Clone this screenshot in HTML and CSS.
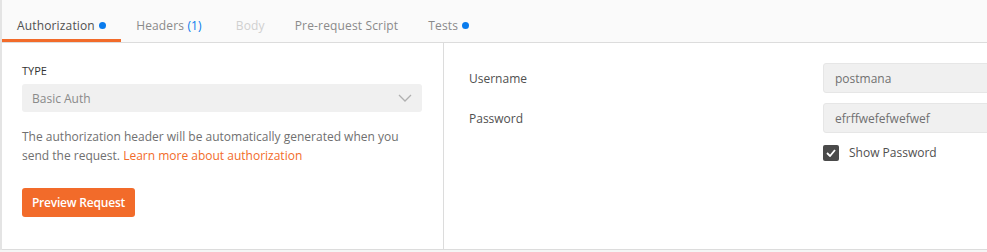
FILE: index.html
```html
<!DOCTYPE html>
<html>
<head>
<meta charset="utf-8">
<link rel="stylesheet" href="styles.css">
</head>
<body>
<div class="app">
  <div class="tabs">
    <div class="tab active">Authorization <span class="dot"></span></div>
    <div class="tab tab-headers">Headers <span class="count">(1)</span></div>
    <div class="tab disabled">Body</div>
    <div class="tab">Pre-request Script</div>
    <div class="tab">Tests <span class="dot"></span></div>
  </div>
  <div class="main">
    <div class="left">
      <div class="type-label">TYPE</div>
      <div class="select">
        <span>Basic Auth</span>
        <svg class="chev" width="14" height="8" viewBox="0 0 14 8"><path d="M1 1 L7 7 L13 1" fill="none" stroke="#b0b0b0" stroke-width="1.3"/></svg>
      </div>
      <p class="desc">The authorization header will be automatically generated when you send the request. <span class="link">Learn more about authorization</span></p>
      <button class="btn">Preview Request</button>
    </div>
    <div class="right">
      <div class="form">
        <div class="label">Username</div>
        <div class="input">postmana</div>
        <div class="label">Password</div>
        <div class="input">efrffwefefwefwef</div>
        <div class="spacer"></div>
        <div class="check-row">
          <span class="checkbox"><svg width="10" height="8" viewBox="0 0 10 8"><path d="M1 4 L4 7 L9 1" fill="none" stroke="#fff" stroke-width="1.8"/></svg></span>
          <span class="check-label">Show Password</span>
        </div>
      </div>
    </div>
  </div>
</div>
</body>
</html>
```
FILE: styles.css
```css
html, body {
  margin: 0;
  padding: 0;
  overflow: hidden;
  background: #f5f5f5;
}
body {
  font-family: "Open Sans", "Noto Sans", sans-serif;
  font-size: 12px;
  color: #505050;
}
.app {
  width: 985px;
  height: 250px;
  border-left: 2px solid #e4e4e4;
  background: #fff;
  display: flex;
  flex-direction: column;
}
.tabs {
  height: 42px;
  background: #fafafa;
  border-bottom: 1px solid #dcdcdc;
  display: flex;
  flex-shrink: 0;
}
.tab {
  height: 42px;
  box-sizing: border-box;
  padding: 11px 15px 0 15px;
  border-bottom: 3px solid transparent;
  display: flex;
  align-items: center;
  color: #8a8a8a;
  white-space: pre;
  letter-spacing: 0.15px;
}
.tab.active {
  color: #505050;
  border-bottom-color: #f26b2a;
}
.tab-headers {
  padding-right: 19px;
}
.tab.disabled {
  color: #d0d0d0;
}
.count {
  color: #097bed;
}
.dot {
  display: inline-block;
  width: 7px;
  height: 7px;
  border-radius: 50%;
  background: #097bed;
  margin-left: 1px;
}
.main {
  flex: 1;
  display: flex;
  border-bottom: 1px solid #dcdcdc;
}
.left {
  width: 401px;
  padding: 20px 20px 0 20px;
  border-right: 1px solid #dcdcdc;
}
.type-label {
  font-size: 11px;
  color: #333;
  line-height: 16px;
  margin-bottom: 5px;
}
.select {
  width: 400px;
  box-sizing: border-box;
  height: 28px;
  background: #f0f0f0;
  border-radius: 3px;
  display: flex;
  align-items: center;
  justify-content: space-between;
  padding: 0 10px;
  color: #8a8a8a;
}
.desc {
  width: 400px;
  margin: 15px 0 0 0;
  line-height: 19px;
  color: #707070;
}
.link {
  color: #f26b2a;
}
.btn {
  margin-top: 23px;
  width: 113px;
  height: 29px;
  padding: 0;
  border: none;
  border-radius: 3px;
  background: #f26b2a;
  color: #fff;
  font-family: "Open Sans", "Noto Sans", sans-serif;
  font-size: 12px;
  font-weight: 600;
  letter-spacing: -0.2px;
}
.right {
  flex: 1;
  padding: 20px 0 0 25px;
  overflow: hidden;
}
.form {
  display: grid;
  grid-template-columns: 354px 200px;
  row-gap: 10px;
  align-items: center;
}
.label {
  color: #505050;
}
.input {
  height: 30px;
  box-sizing: border-box;
  background: #f0f0f0;
  border: 1px solid #e6e6e6;
  border-radius: 3px;
  padding-left: 11px;
  display: flex;
  align-items: center;
  color: #707070;
}
.check-row {
  display: flex;
  align-items: center;
  gap: 10px;
  margin-top: 1px;
}
.checkbox {
  width: 16px;
  height: 16px;
  border-radius: 2px;
  background: #4a4a4a;
  display: flex;
  align-items: center;
  justify-content: center;
}
.check-label {
  color: #505050;
}
```
